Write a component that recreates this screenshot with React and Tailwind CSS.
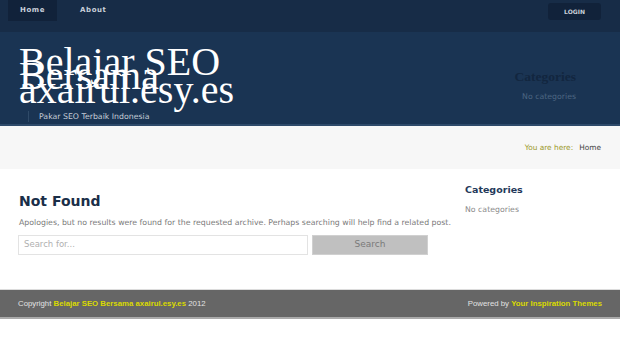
export default function App() {
  return (
    <div className="min-h-[343px] bg-white font-['DejaVu_Sans',sans-serif]">
      {/* top nav */}
      <nav className="h-[32px] bg-[#172c47] flex items-start justify-between pl-[8px] pr-[19px]">
        <ul className="flex">
          <li className="h-[21px] w-[49px] bg-[#11223a] flex items-center justify-center text-[7px] font-bold tracking-[0.6px] text-[#c9d0da]">
            Home
          </li>
          <li className="h-[21px] px-[23px] flex items-center text-[7px] font-bold tracking-[0.6px] text-[#c9d0da]">
            About
          </li>
        </ul>
        <button className="mt-[3px] h-[17px] w-[53px] rounded-[3px] bg-[#11223a] text-[6px] font-bold text-[#c9d0da]">
          LOGIN
        </button>
      </nav>

      {/* header */}
      <header className="h-[94px] bg-[#1a3453] border-b-[2px] border-[#2e4a6a] flex justify-between px-[19px]">
        <div className="pt-[13px]">
          <h1 className="w-[250px] font-['Liberation_Serif',serif] text-[40px] leading-[14px] text-white pt-[10px]">
            Belajar SEO Bersama axairul.esy.es
          </h1>
          <p className="mt-[14px] ml-[9px] border-l border-[#2f4a68] pl-[10px] text-[7.8px] text-[#c4ccd6] leading-[11px]">
            Pakar SEO Terbaik Indonesia
          </p>
        </div>
        <div className="pt-[37px] pr-[25px] text-right">
          <h3 className="font-['Liberation_Serif',serif] font-bold text-[13.5px] leading-[16px] text-[#12263f]">Categories</h3>
          <p className="mt-[6px] text-[7.8px] text-[#4d6682]">No categories</p>
        </div>
      </header>

      {/* breadcrumb */}
      <div className="h-[43px] bg-[#f7f7f7] flex items-center justify-end pr-[19px] text-[7.4px]">
        <span className="text-[#9d9a2c]">You are here:</span>
        <span className="ml-[6px] text-[#444]">Home</span>
      </div>

      {/* content */}
      <div className="flex px-[19px] pt-[20px] h-[120px]">
        <main className="w-[440px]">
          <h2 className="text-[14px] font-bold text-[#1a2e48] leading-[20px] mt-[2px]">Not Found</h2>
          <p className="mt-[6px] text-[7.8px] text-[#7a7a7a] whitespace-nowrap">
            Apologies, but no results were found for the requested archive. Perhaps searching will help find a related post.
          </p>
          <div className="mt-[6px] flex gap-[4px] -ml-[1px]">
            <div className="h-[20px] w-[290px] border border-[#e3e3e3] flex items-center pl-[5px] text-[8.5px] text-[#b0b0b0]">
              Search for...
            </div>
            <div className="h-[20px] w-[116px] bg-[#c0c0c0] border border-[#d0d0d0] flex items-center justify-center text-[9px] text-[#7a7a7a]">
              Search
            </div>
          </div>
        </main>
        <aside className="ml-[6px]">
          <h3 className="text-[9.5px] font-bold text-[#24395a] leading-[14px] -mt-[6px]">Categories</h3>
          <p className="mt-[7px] text-[7.8px] text-[#8a8a8a]">No categories</p>
        </aside>
      </div>

      {/* footer */}
      <footer className="h-[30px] bg-[#666] border-t border-[#dcdcdc] border-b-[2px] border-b-[#aaa] flex items-center justify-between px-[18px] text-[7.8px] font-['Liberation_Sans',sans-serif]">
        <span className="text-[#e2e2e2]">
          Copyright <b className="text-[#dada00]">Belajar SEO Bersama axairul.esy.es</b> 2012
        </span>
        <span className="text-[#e2e2e2]">
          Powered by <b className="text-[#dada00]">Your Inspiration Themes</b>
        </span>
      </footer>
    </div>
  );
}
